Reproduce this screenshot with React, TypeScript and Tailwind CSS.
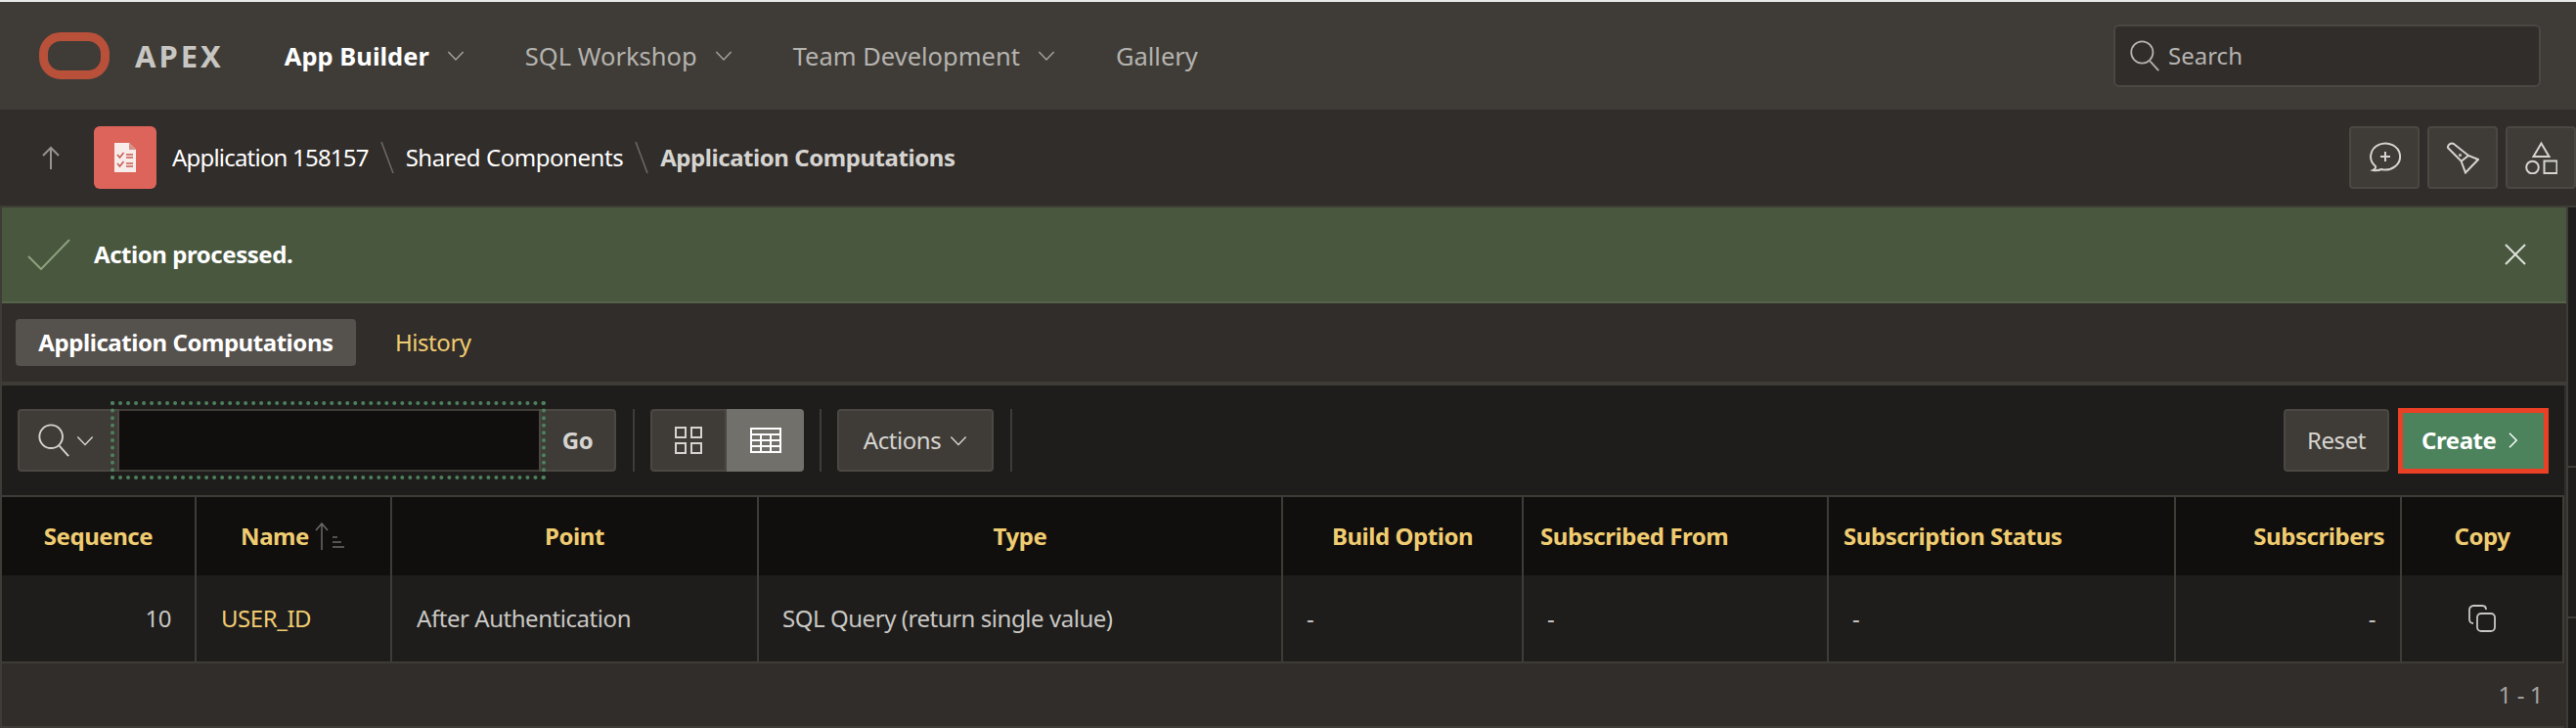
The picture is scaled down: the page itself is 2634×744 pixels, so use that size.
import { ReactNode } from 'react'

const Chevron = ({ className = 'w-[20px] h-[12px]' }: { className?: string }) => (
  <svg viewBox="0 0 20 12" className={className} fill="none" stroke="currentColor" strokeWidth="1.6">
    <path d="M1.5 1.5 10 10.5 18.500 1.5" />
  </svg>
)

const SearchIcon = ({ className = '' }: { className?: string }) => (
  <svg viewBox="0 0 36 36" className={className} fill="none" stroke="currentColor" strokeWidth="2">
    <circle cx="15" cy="14" r="12.5" />
    <path d="M24 24 34 35" />
  </svg>
)

const Slash = () => (
  <svg viewBox="0 0 14 32" className="mx-[12px] w-[14px] h-[32px] text-[#6d6a66]" fill="none" stroke="currentColor" strokeWidth="1.5">
    <path d="M1 0l12 32" />
  </svg>
)

function NavItem({ label, active, menu = true }: { label: string; active?: boolean; menu?: boolean }) {
  return (
    <div className={`flex items-center gap-[18px] ${active ? 'text-white font-bold' : 'text-[#b5b3af]'}`}>
      <span>{label}</span>
      {menu && <Chevron className="w-[18px] h-[12px] text-[#a5a3a0]" />}
    </div>
  )
}

function ToolButton({ children }: { children: ReactNode }) {
  return (
    <div className="w-[72px] h-[64px] flex items-center justify-center bg-[#3f3c37] border-2 border-[#4b4843] rounded-[4px] text-[#d6d4d0]">
      {children}
    </div>
  )
}

function Head({ children, className = '' }: { children: ReactNode; className?: string }) {
  return (
    <div className={`h-[80px] flex items-center bg-[#100f0e] border-r-2 border-[#3f3c37] text-[#f0cc71] font-bold ${className}`}>
      {children}
    </div>
  )
}

function Cell({ children, className = '' }: { children: ReactNode; className?: string }) {
  return (
    <div className={`h-[88px] flex items-center bg-[#1e1d1c] border-r-2 border-[#3f3c37] text-[#c9c7c3] ${className}`}>
      {children}
    </div>
  )
}

export default function App() {
  return (
    <div className="w-[2634px] h-[744px] overflow-hidden bg-[#312d2a] text-[24px] leading-[32px] tracking-[-0.45px] flex flex-col font-['Noto_Sans','Open_Sans',sans-serif]">
      <div className="h-[2px] bg-[#e8e8e6]" />

      {/* top nav */}
      <div className="h-[110px] flex items-center bg-[#3f3c37] pl-[40px] pr-[36px]">
        <div className="w-[72px] h-[48px] border-[9px] border-[#b8503a] rounded-[22px]" />
        <span className="ml-[26px] text-[#c8c6c2] font-bold text-[31px] tracking-[3px]">APEX</span>
        <div className="ml-[62px] flex items-center gap-[62px] text-[25.5px] tracking-normal">
          <NavItem label="App Builder" active />
          <NavItem label="SQL Workshop" />
          <NavItem label="Team Development" />
          <NavItem label="Gallery" menu={false} />
        </div>
        <div className="ml-auto w-[437px] h-[64px] flex items-center gap-[8px] pl-[14px] bg-[#312d2a] border-2 border-[#4b4843] rounded-[6px] text-[#b5b3af] tracking-normal">
          <SearchIcon className="w-[32px] h-[32px]" />
          <span>Search</span>
        </div>
      </div>

      {/* breadcrumb */}
      <div className="h-[98px] flex items-center bg-[#312d2a] border-b-2 border-[#3f3c37] box-content">
        <svg viewBox="0 0 20 24" className="ml-[42px] w-[20px] h-[24px] text-[#96948f]" fill="none" stroke="currentColor" strokeWidth="2">
          <path d="M10 24V2M2 10l8-8 8 8" />
        </svg>
        <div className="ml-[34px] w-[64px] h-[64px] flex items-center justify-center bg-[#dd645a] rounded-[6px]">
          <svg viewBox="0 0 24 32" className="w-[24px] h-[32px]">
            <path d="M1 1h15l7 7v23H1z" fill="#f8ecea" />
            <path d="M16 1l7 7h-7z" fill="#d4908a" />
            <g fill="none" stroke="#c65a50" strokeWidth="1.5">
              <path d="M4 13l2.500 3 4-5M4 22l2.500 3 4-5M13 13h7M13 16h7M13 22h7M13 25h7" />
            </g>
          </svg>
        </div>
        <span className="ml-[16px] text-white tracking-[-0.8px]">Application 158157</span>
        <Slash />
        <span className="text-white">Shared Components</span>
        <Slash />
        <span className="text-[#d6d4d0] font-bold">Application Computations</span>
        <div className="ml-auto flex gap-[8px]">
          <ToolButton>
            <svg viewBox="0 0 34 34" className="w-[34px] h-[34px]" fill="none" stroke="currentColor" strokeWidth="2">
              <path d="M5.500 30C7.500 29 8.500 27.500 8 26A15 13.500 0 1 1 14 29C11 30.500 8.500 30.500 5.500 30ZM18 11v10M13 16h10" />
            </svg>
          </ToolButton>
          <ToolButton>
            <svg viewBox="0 0 34 34" className="w-[34px] h-[34px]" fill="none" stroke="currentColor" strokeWidth="2">
              <path d="M2 7C1.500 4 5 1.500 8 3L23 15l10 4-13 13.500-4.500-12zM16 20.500 23 15" />
              <circle cx="14.500" cy="14.500" r="0.6" />
            </svg>
          </ToolButton>
          <ToolButton>
            <svg viewBox="0 0 34 34" className="w-[34px] h-[34px]" fill="none" stroke="currentColor" strokeWidth="2">
              <path d="M17.500 2.500 25.500 16H9.500zM20.500 20.500h13v12.500h-13z" />
              <circle cx="8.500" cy="27" r="6.300" />
            </svg>
          </ToolButton>
        </div>
      </div>

      <div className="flex-1 flex min-h-0">
        <div className="w-[2624px] flex flex-col border-l-2 border-[#3f3c37]">
          {/* success message */}
          <div className="h-[98px] flex items-center bg-[#49573f] text-white font-bold pl-[26px] pr-[41px] border-b-2 border-[#55634b]">
            <svg viewBox="0 0 44 32" className="w-[44px] h-[32px] text-[#8ca27d]" fill="none" stroke="currentColor" strokeWidth="2">
              <path d="M1 18l13 13L43 1" />
            </svg>
            <span className="ml-[24px]">Action processed.</span>
            <svg viewBox="0 0 22 22" className="ml-auto w-[22px] h-[22px] text-[#dfe3da]" fill="none" stroke="currentColor" strokeWidth="2">
              <path d="M1 1l20 20M21 1 1 21" />
            </svg>
          </div>

          {/* tabs */}
          <div className="h-[84px] flex items-center gap-[40px] bg-[#312d2a] border-b-4 border-[#3f3c37] pl-[14px]">
            <div className="w-[348px] h-[48px] flex items-center justify-center bg-[#55514c] rounded-[4px] text-white font-bold">
              Application Computations
            </div>
            <span className="text-[#f0cc71]">History</span>
          </div>

          {/* report toolbar */}
          <div className="w-[2620px] h-[114px] flex items-center bg-[#1e1d1c] border-b-2 border-[#3f3c37] pl-[16px] pr-[16px] text-[#d6d4d0]">
            <div className="relative flex h-[64px]">
              <div className="w-[104px] flex items-center gap-[6px] pl-[18px] bg-[#3f3c37] border-2 border-[#4b4843] rounded-l-[4px]">
                <SearchIcon className="w-[34px] h-[34px]" />
                <Chevron className="w-[18px] h-[11px]" />
              </div>
              <div className="w-[429px] bg-[#100f0e] border-y-2 border-[#3f3c37]" />
              <div className="w-[79px] flex items-center justify-center bg-[#3f3c37] border-2 border-[#4b4843] rounded-r-[4px] font-bold">Go</div>
              <div className="absolute left-[95px] -top-[8px] w-[445px] h-[80px] border-[4px] border-dotted border-[#4c825c]" />
            </div>
            <div className="ml-[17px] w-[2px] h-[64px] bg-[#3f3c37]" />
            <div className="ml-[16px] flex h-[64px]">
              <div className="w-[78px] flex items-center justify-center bg-[#3f3c37] border-2 border-[#4b4843] rounded-l-[4px]">
                <svg viewBox="0 0 28 28" className="w-[28px] h-[28px]" fill="none" stroke="currentColor" strokeWidth="2">
                  <path d="M1 1h10v10H1zM17 1h10v10H17zM1 17h10v10H1zM17 17h10v10H17z" />
                </svg>
              </div>
              <div className="w-[79px] flex items-center justify-center bg-[#72706b] rounded-r-[4px] text-white">
                <svg viewBox="0 0 32 26" className="w-[32px] h-[26px]" fill="none" stroke="currentColor" strokeWidth="2">
                  <path d="M1 1h30v24H1zM1 7h30M1 13h30M1 19h30M11 7v18M21 7v18" />
                </svg>
              </div>
            </div>
            <div className="ml-[16px] w-[2px] h-[64px] bg-[#3f3c37]" />
            <div className="ml-[16px] w-[160px] h-[64px] flex items-center justify-center gap-[9px] bg-[#3f3c37] border-2 border-[#4b4843] rounded-[4px]">
              <span>Actions</span>
              <Chevron className="w-[18px] h-[11px]" />
            </div>
            <div className="ml-[17px] w-[2px] h-[64px] bg-[#3f3c37]" />
            <div className="ml-auto w-[108px] h-[64px] flex items-center justify-center bg-[#3f3c37] border-2 border-[#4b4843] rounded-[4px]">Reset</div>
            <div className="ml-[9px] w-[154px] h-[67px] flex items-center pl-[19px] gap-[13px] bg-[#4c825c] border-[5px] border-[#ea4026] text-white font-bold">
              <span>Create</span>
              <svg viewBox="0 0 12 20" className="w-[10px] h-[16px]" fill="none" stroke="currentColor" strokeWidth="1.8">
                <path d="M1 1l9 9-9 9" />
              </svg>
            </div>
          </div>

          {/* report table */}
          <div className="w-[2620px] grid grid-cols-[199px_200px_375px_536px_246px_312px_355px_231px_166px] border-b-2 border-[#3f3c37] box-content">
            <Head className="justify-center">Sequence</Head>
            <Head className="justify-center gap-[6px]">
              <span>Name</span>
              <svg viewBox="0 0 32 28" className="w-[32px] h-[28px] text-[#6d6a66]" fill="none" stroke="currentColor" strokeWidth="1.5">
                <path d="M7 28V1M1 8l6-7 6 7M18 15h5M18 20h9M18 25h12" />
              </svg>
            </Head>
            <Head className="justify-center">Point</Head>
            <Head className="justify-center">Type</Head>
            <Head className="justify-center">Build Option</Head>
            <Head className="pl-[17px]">Subscribed From</Head>
            <Head className="pl-[15px]">Subscription Status</Head>
            <Head className="justify-end pr-[16px]">Subscribers</Head>
            <Head className="justify-center border-r-0">Copy</Head>

            <Cell className="justify-end pr-[24px]">10</Cell>
            <Cell className="pl-[25px] text-[#f0cc71]">USER_ID</Cell>
            <Cell className="pl-[25px]">After Authentication</Cell>
            <Cell className="pl-[24px]">SQL Query (return single value)</Cell>
            <Cell className="pl-[24px]">-</Cell>
            <Cell className="pl-[24px]">-</Cell>
            <Cell className="pl-[24px]">-</Cell>
            <Cell className="justify-end pr-[25px]">-</Cell>
            <Cell className="justify-center border-r-0">
              <svg viewBox="0 0 28 28" className="w-[28px] h-[28px]" fill="none" stroke="currentColor" strokeWidth="1.8">
                <rect x="9" y="9" width="18" height="18" rx="4" />
                <path d="M5 19c-2 0-4-1-4-4V5c0-2 2-4 4-4h9c3 0 4 2 4 4" />
              </svg>
            </Cell>
          </div>

          {/* pagination */}
          <div className="w-[2620px] flex-1 flex items-center justify-end pr-[22px] bg-[#312d2a] text-[#a5a3a0] border-b-2 border-[#3f3c37]">1 - 1</div>
        </div>

        {/* scrollbar gutter */}
        <div className="flex-1 flex flex-col bg-[#1e1d1c] border-l-2 border-[#3f3c37]">
          <div className="h-[266px] border-b-2 border-[#3f3c37]" />
          <div className="h-[154px] border-b-2 border-[#3f3c37]" />
        </div>
      </div>
    </div>
  )
}
